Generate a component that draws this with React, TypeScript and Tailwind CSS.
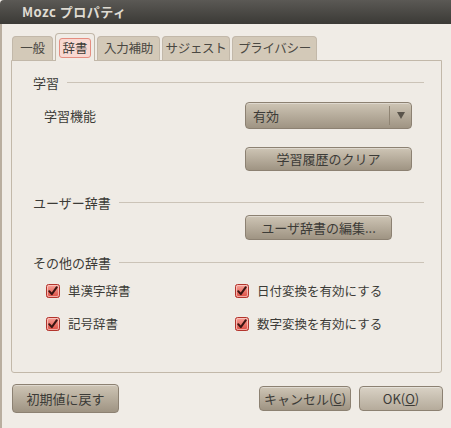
import React from 'react';

const font = "font-['Noto_Sans_CJK_JP','Noto_Sans',sans-serif]";

// Beige gradient push button in the Ambiance style
const Button = ({ label, className = '' }: { label: React.ReactNode; className?: string }) => (
    <div
        className={`flex items-center justify-center rounded-[4px] border border-[#8c8172] bg-gradient-to-b from-[#cec5b5] to-[#9f9483] text-[13px] text-[#3c3b37] shadow-[inset_0_1px_0_rgba(255,255,255,0.35)] ${className}`}
    >
        {label}
    </div>
);

const SectionHeader = ({ title, className = '' }: { title: string; className?: string }) => (
    <div className={`flex h-[16px] items-center ${className}`}>
        <span className="text-[13px] leading-none text-[#3c3b37]">{title}</span>
        <div className="ml-[8px] h-px flex-1 bg-[#cbc3b7]" />
    </div>
);

const CheckBox = () => (
    <svg width="14" height="14" viewBox="0 0 14 14" className="shrink-0">
        <defs>
            <linearGradient id="cb" x1="0" y1="0" x2="0" y2="1">
                <stop offset="0" stopColor="#f8a49b" />
                <stop offset="1" stopColor="#dc4b40" />
            </linearGradient>
        </defs>
        <rect x="0.5" y="0.5" width="13" height="13" rx="2" fill="url(#cb)" stroke="#b2342c" />
        <rect x="1.5" y="1.5" width="11" height="11" rx="1.5" fill="none" stroke="#fbd0cb" strokeOpacity="0.7" />
        <path d="M3.2 7.2 L5.8 10.2 L10.8 3.2" fill="none" stroke="#3a1512" strokeWidth="2" strokeLinecap="round" strokeLinejoin="round" />
    </svg>
);

const Check = ({ label }: { label: string }) => (
    <div className="flex h-[20px] items-center gap-[8px]">
        <CheckBox />
        <span className="text-[12.5px] text-[#3c3b37]">{label}</span>
    </div>
);

const tabs = [
    { label: '一般', w: 'w-[41px]' },
    { label: '辞書', w: 'w-[40px]' },
    { label: '入力補助', w: 'w-[63px]' },
    { label: 'サジェスト', w: 'w-[68px]' },
    { label: 'プライバシー', w: 'w-[85px]' },
];

export default function App() {
    return (
        <div className={`${font} flex h-[428px] w-[451px] flex-col overflow-hidden bg-[#f0ece6]`}>
            {/* Title bar */}
            <div className="flex h-[24px] shrink-0 items-center rounded-tl-[4px] bg-gradient-to-b from-[#5b5955] to-[#3b3a36] pl-[22px]">
                <span className="text-[13px] font-bold tracking-[0.5px] text-[#dfdbd2]">Mozc プロパティ</span>
            </div>

            <div className="flex flex-1 flex-col border-l-[2px] border-[#b9ae9f] pl-[9px] pr-[9px]">
                {/* Tabs */}
                <div className="mt-[9px] flex h-[27px] items-end gap-[2px] pl-[1px]">
                    {tabs.map((t, i) =>
                        i === 1 ? (
                            <div
                                key={t.label}
                                className={`relative z-10 -mb-px flex h-[28px] items-center justify-center rounded-t-[4px] border border-b-0 border-[#c2b8a9] bg-[#f0ece6] ${t.w}`}
                            >
                                <span className="rounded-[3px] border border-[#e48d80] bg-[#f8d8d1] px-[2px] text-[12.5px] leading-[18px] text-[#3c3b37]">
                                    {t.label}
                                </span>
                            </div>
                        ) : (
                            <div
                                key={t.label}
                                className={`flex h-[24px] items-center justify-center whitespace-nowrap rounded-t-[4px] border border-b-0 border-[#c2b8a9] bg-[#d3c9b8] text-[12.5px] tracking-[-0.3px] text-[#4a4842] ${t.w}`}
                            >
                                {t.label}
                            </div>
                        ),
                    )}
                </div>

                {/* Dictionary page */}
                <div className="flex h-[313px] w-[431px] flex-col rounded-b-[3px] border border-[#c2b8a9] bg-[#efebe5] pl-[21px] pr-[17px]">
                    <SectionHeader title="学習" className="mt-[13px]" />
                    <div className="mt-[12px] flex h-[27px] items-center">
                        <span className="ml-[11px] text-[13px] text-[#3c3b37]">学習機能</span>
                        <div className="ml-auto mr-[12px] flex h-[27px] w-[167px] items-stretch rounded-[4px] border border-[#8c8172] bg-gradient-to-b from-[#cec5b5] to-[#9f9483] shadow-[inset_0_1px_0_rgba(255,255,255,0.35)]">
                            <span className="flex flex-1 items-center pl-[7px] text-[13px] text-[#3c3b37]">有効</span>
                            <div className="my-[3px] w-px bg-[#8f8473]" />
                            <div className="flex w-[21px] items-center justify-center">
                                <svg width="8" height="7" viewBox="0 0 8 7">
                                    <path d="M0 0 H8 L4 7 Z" fill="#5a544b" />
                                </svg>
                            </div>
                        </div>
                    </div>
                    <div className="mt-[18px] flex justify-end pr-[12px]">
                        <Button label="学習履歴のクリア" className="h-[24px] w-[167px]" />
                    </div>

                    <SectionHeader title="ユーザー辞書" className="mt-[23px]" />
                    <div className="mt-[5px] flex pl-[212px]">
                        <Button label="ユーザ辞書の編集..." className="h-[25px] w-[147px]" />
                    </div>

                    <SectionHeader title="その他の辞書" className="mt-[14px]" />
                    <div className="mt-[11px] grid grid-cols-[189px_1fr] gap-y-[13px] pl-[13px]">
                        <Check label="単漢字辞書" />
                        <Check label="日付変換を有効にする" />
                        <Check label="記号辞書" />
                        <Check label="数字変換を有効にする" />
                    </div>
                </div>

                {/* Dialog buttons */}
                <div className="mt-[11px] flex items-center">
                    <Button label="初期値に戻す" className="ml-[1px] h-[29px] w-[107px]" />
                    <Button
                        label={
                            <span>
                                キャンセル(<span className="underline">C</span>)
                            </span>
                        }
                        className="ml-auto h-[25px] w-[92px]"
                    />
                    <Button
                        label={
                            <span>
                                OK(<span className="underline">O</span>)
                            </span>
                        }
                        className="ml-[8px] mr-[-1px] h-[25px] w-[84px] from-[#d9d2c5] to-[#b5ab9b]"
                    />
                </div>
            </div>
        </div>
    );
}
